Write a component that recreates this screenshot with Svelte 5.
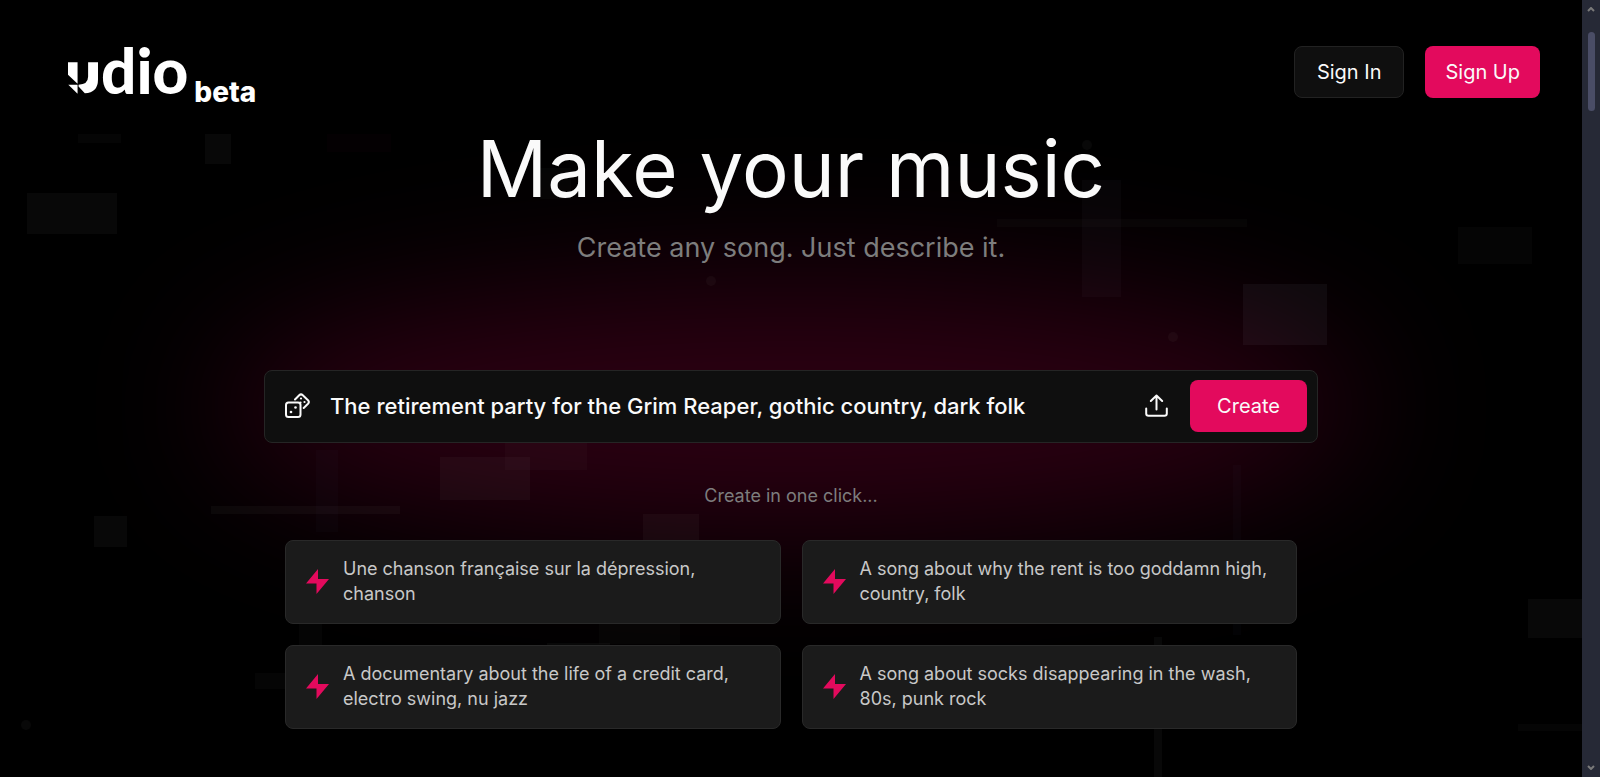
<script lang="ts">
	interface Block {
		x: number;
		y: number;
		w: number;
		h: number;
		fill?: string;
		dim?: boolean;
	}

	let prompt = $state('The retirement party for the Grim Reaper, gothic country, dark folk');

	const suggestions = [
		'Une chanson française sur la dépression, chanson',
		'A song about why the rent is too goddamn high, country, folk',
		'A documentary about the life of a credit card, electro swing, nu jazz',
		'A song about socks disappearing in the wash, 80s, punk rock'
	];

	const blocks: Block[] = [
		{ x: 78, y: 134, w: 43, h: 9, dim: true },
		{ x: 205, y: 134, w: 26, h: 30 },
		{ x: 27, y: 193, w: 90, h: 41 },
		{ x: 327, y: 134, w: 64, h: 18, fill: '#e30a5d', dim: true },
		{ x: 540, y: 168, w: 31, h: 31, dim: true },
		{ x: 94, y: 516, w: 33, h: 31 },
		{ x: 211, y: 506, w: 189, h: 8 },
		{ x: 316, y: 450, w: 22, h: 82, fill: '#a080ff', dim: true },
		{ x: 440, y: 457, w: 90, h: 43 },
		{ x: 505, y: 443, w: 82, h: 27, dim: true },
		{ x: 643, y: 514, w: 56, h: 30 },
		{ x: 299, y: 620, w: 23, h: 30, dim: true },
		{ x: 599, y: 620, w: 81, h: 24, dim: true },
		{ x: 547, y: 643, w: 63, h: 6 },
		{ x: 255, y: 673, w: 34, h: 16, dim: true },
		{ x: 1082, y: 180, w: 39, h: 117, fill: '#c0a0e0' },
		{ x: 997, y: 219, w: 250, h: 8, dim: true },
		{ x: 1458, y: 227, w: 74, h: 37, dim: true },
		{ x: 1243, y: 284, w: 84, h: 61 },
		{ x: 1243, y: 284, w: 84, h: 61, fill: '#a0a0ff', dim: true },
		{ x: 1233, y: 465, w: 8, h: 170, fill: '#a080ff', dim: true },
		{ x: 1154, y: 637, w: 8, h: 140 },
		{ x: 1528, y: 599, w: 54, h: 39 },
		{ x: 1518, y: 724, w: 64, h: 7, dim: true }
	];

	const dots = [
		[26, 725],
		[711, 281],
		[1087, 145],
		[1173, 337]
	];
</script>

<div class="window">
	<div class="page">
		<svg class="backdrop" viewBox="0 0 1582 777" preserveAspectRatio="none" aria-hidden="true">
			{#each blocks as { x, y, w, h, fill, dim }}
				<rect {x} {y} width={w} height={h} fill={fill ?? '#fff'} class:dim />
			{/each}
			{#each dots as [cx, cy]}
				<circle {cx} {cy} r="5" fill="#fff" />
			{/each}
		</svg>

		<header>
			<a class="logo" href="/" aria-label="udio beta">
				<svg class="mark" viewBox="56 95 91 95" aria-hidden="true">
					<path d="M56 95H85V160L56 133Z" />
					<path d="M57 163H85V190Z" />
					<path d="M117 95H147V147Q147 187 107 189L88 168V163Q117 162 117 138Z" />
				</svg>
				<span class="name">dio</span>
				<span class="tag">beta</span>
			</a>
			<nav>
				<button class="btn outline">Sign In</button>
				<button class="btn primary">Sign Up</button>
			</nav>
		</header>

		<main>
			<h1>Make your music</h1>
			<p class="subtitle">Create any song. Just describe it.</p>

			<form onsubmit={(e) => e.preventDefault()}>
				<button type="button" class="icon" aria-label="Random prompt">
					<svg width="25" height="25" viewBox="0 0 25 25">
						<rect x="1" y="9.5" width="14.5" height="14.5" rx="2.5" />
						<path d="M10 6.5L14.2 2.2Q16 .5 17.8 2.2L23 7.2Q24.7 9 23 10.8L18.7 15" />
						<g class="pips">
							<circle cx="10.5" cy="14.5" r="1.3" />
							<circle cx="6" cy="19" r="1.3" />
							<circle cx="16" cy="5.5" r="1.1" />
							<circle cx="15.5" cy="9.5" r="1.1" />
							<circle cx="19.5" cy="9" r="1.1" />
						</g>
					</svg>
				</button>
				<input type="text" aria-label="Song description" bind:value={prompt} />
				<button type="button" class="icon" aria-label="Upload audio">
					<svg width="23" height="23" viewBox="0 0 23 23">
						<path d="M1.2 14.5V19.5Q1.2 21.8 3.5 21.8H19.5Q21.8 21.8 21.8 19.5V14.5" />
						<path d="M11.5 15.5V1.5M5.8 7L11.5 1.5L17.2 7" />
					</svg>
				</button>
				<button class="btn primary create">Create</button>
			</form>

			<p class="hint">Create in one click...</p>

			<div class="suggestions">
				{#each suggestions as text}
					<button class="card" onclick={() => (prompt = text)}>
						<svg width="23" height="25" viewBox="0 0 23 25" aria-hidden="true">
							<path d="M12 0V10H23L10.500 25V14.500H0Z" />
						</svg>
						<span>{text}</span>
					</button>
				{/each}
			</div>
		</main>
	</div>

	<div class="scrollbar" aria-hidden="true">
		<svg width="8" height="5" viewBox="0 0 8 5"><path d="M1 4L4 1L7 4" /></svg>
		<div class="thumb"></div>
		<svg width="8" height="5" viewBox="0 0 8 5"><path d="M1 1L4 4L7 1" /></svg>
	</div>
</div>

<style>
	:global(body) {
		background: #000;
	}

	.window {
		display: flex;
		min-height: 100vh;
		font-family: Inter, sans-serif;
		color: #fafafa;
	}

	.page {
		position: relative;
		isolation: isolate;
		flex: 1;
		box-sizing: border-box;
		padding: 46px 42px 48px;
		overflow: hidden;
		background: #000;
	}

	.backdrop {
		position: absolute;
		inset: 0;
		width: 100%;
		height: 100%;
	}

	.backdrop rect,
	.backdrop circle {
		opacity: 0.03;
	}

	.backdrop rect.dim {
		opacity: 0.018;
	}

	header,
	main {
		position: relative;
	}

	header {
		display: flex;
		justify-content: space-between;
		align-items: flex-start;
		height: 64px;
	}

	.logo {
		display: flex;
		align-items: flex-end;
		height: 60px;
		margin-left: 26px;
		color: #fff;
		text-decoration: none;
	}

	.mark {
		width: 30px;
		height: 32px;
		margin-bottom: 12px;
		fill: currentColor;
	}

	.name {
		margin-left: 3px;
		padding-bottom: 4px;
		font: 900 62px/64px Lato, sans-serif;
	}

	.tag {
		margin-left: 6px;
		font-size: 28px;
		font-weight: 800;
		line-height: 28px;
	}

	nav {
		display: flex;
		gap: 21px;
	}

	button {
		font-family: inherit;
		cursor: pointer;
	}

	.btn {
		height: 52px;
		border: 1px solid transparent;
		border-radius: 8px;
		font-size: 20px;
		color: #fafafa;
	}

	.outline {
		padding: 0 22px;
		background: #0f0f0f;
		border-color: #222;
	}

	.primary {
		padding: 0 19px;
		background: #e30a5d;
	}

	main {
		display: flex;
		flex-direction: column;
		align-items: center;
	}

	h1 {
		margin: 15px 0 0;
		font-size: 78px;
		font-weight: 400;
		line-height: 88px;
	}

	.subtitle {
		margin: 17px 0 0;
		font-size: 27px;
		line-height: 36px;
		color: #7d7d7d;
	}

	form {
		position: relative;
		display: flex;
		align-items: center;
		gap: 20px;
		box-sizing: border-box;
		width: 100%;
		max-width: 1054px;
		height: 73px;
		margin-top: 104px;
		padding: 0 10px 2px 20px;
		background: #0f0f0f;
		border: 1px solid #252525;
		border-radius: 8px;
	}

	/* pink glow behind the prompt bar */
	form::before {
		content: '';
		position: absolute;
		z-index: -1;
		inset: -90px -50px;
		border-radius: 50%;
		background: #2c0012;
		filter: blur(70px);
	}

	.icon {
		display: flex;
		padding: 0;
		background: none;
		border: 0;
	}

	.icon svg {
		fill: none;
		stroke: #fafafa;
		stroke-width: 2;
		stroke-linecap: round;
		stroke-linejoin: round;
	}

	.icon .pips {
		fill: #fafafa;
		stroke: none;
	}

	input {
		flex: 1;
		min-width: 0;
		padding: 0;
		background: none;
		border: 0;
		outline: 0;
		font-family: inherit;
		font-size: 22px;
		font-weight: 500;
		color: #fafafa;
	}

	.create {
		margin-left: 2px;
		padding: 0 26px;
	}

	.hint {
		margin: 40px 0 0;
		font-size: 18px;
		line-height: 26px;
		color: #7d7d7d;
	}

	.suggestions {
		display: grid;
		grid-template-columns: 1fr 1fr;
		gap: 21px;
		width: 100%;
		max-width: 1012px;
		margin-top: 31px;
	}

	.card {
		display: flex;
		align-items: center;
		gap: 14px;
		padding: 15px 20px 17px;
		background: #1b1b1b;
		border: 1px solid #292929;
		border-radius: 8px;
		font-size: 18px;
		line-height: 25px;
		text-align: left;
		color: #c8c8c8;
	}

	.card svg {
		flex: none;
		fill: #e30a5d;
	}

	.scrollbar {
		display: flex;
		flex-direction: column;
		align-items: center;
		box-sizing: border-box;
		width: 18px;
		padding: 7px 0;
		background: #262936;
	}

	.scrollbar path {
		fill: none;
		stroke: #7a7a7a;
		stroke-width: 2;
	}

	.thumb {
		width: 7px;
		height: 79px;
		margin: 20px 0 auto;
		border-radius: 4px;
		background: #4a4d66;
	}
</style>
